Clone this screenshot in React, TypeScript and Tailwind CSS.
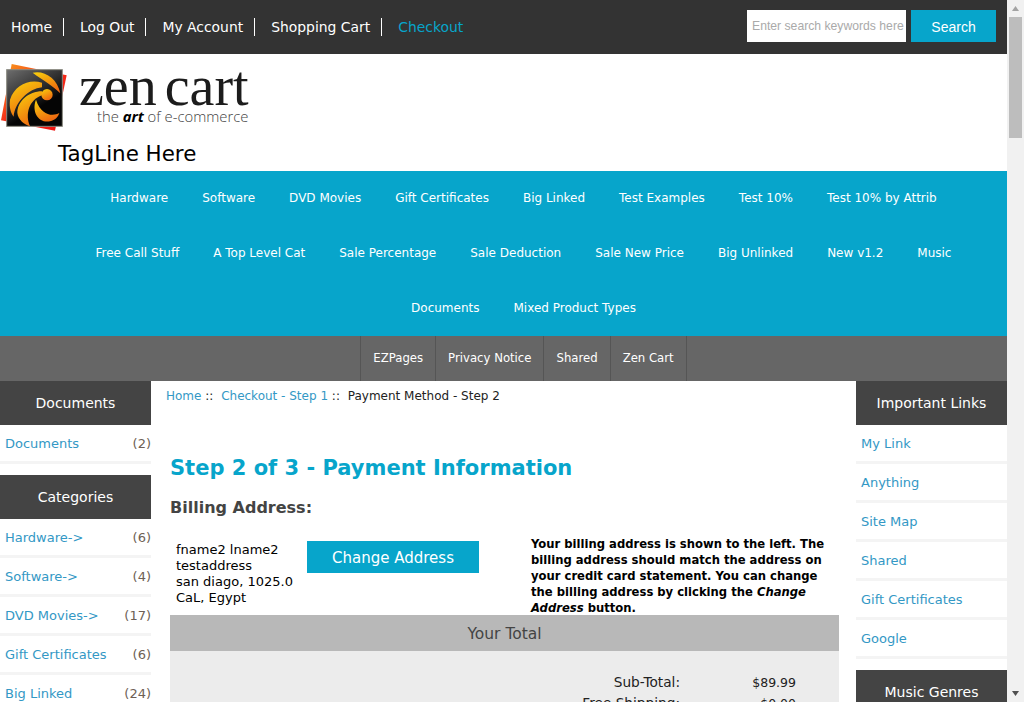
const font = { fontFamily: '"DejaVu Sans", sans-serif' }

const topLinks = ['Home', 'Log Out', 'My Account', 'Shopping Cart']
const catRows = [
  ['Hardware', 'Software', 'DVD Movies', 'Gift Certificates', 'Big Linked', 'Test Examples', 'Test 10%', 'Test 10% by Attrib'],
  ['Free Call Stuff', 'A Top Level Cat', 'Sale Percentage', 'Sale Deduction', 'Sale New Price', 'Big Unlinked', 'New v1.2', 'Music'],
  ['Documents', 'Mixed Product Types'],
]
const ezPages = ['EZPages', 'Privacy Notice', 'Shared', 'Zen Cart']
const categories: [string, string][] = [
  ['Hardware->', '(6)'],
  ['Software->', '(4)'],
  ['DVD Movies->', '(17)'],
  ['Gift Certificates', '(6)'],
  ['Big Linked', '(24)'],
]
const importantLinks = ['My Link', 'Anything', 'Site Map', 'Shared', 'Gift Certificates', 'Google']

function Logo() {
  return (
    <div className="relative h-[117px] pt-[4px]">
      <svg width="90" height="80" viewBox="0 0 270 240">
        <defs>
          <linearGradient id="back" x1="0" y1="0" x2="1" y2="1">
            <stop offset="0" stopColor="#f9a11b" />
            <stop offset="0.45" stopColor="#f5301a" />
            <stop offset="1" stopColor="#ee1111" />
          </linearGradient>
          <linearGradient id="plate" x1="0" y1="0" x2="0.6" y2="1">
            <stop offset="0" stopColor="#6e6e6e" />
            <stop offset="0.5" stopColor="#2c2c2c" />
            <stop offset="0.75" stopColor="#050505" />
          </linearGradient>
          <linearGradient id="arm" x1="0" y1="0" x2="0.5" y2="1">
            <stop offset="0" stopColor="#f8d20c" />
            <stop offset="1" stopColor="#ee6a10" />
          </linearGradient>
        </defs>
        <path d="M35 18 L200 52 L165 218 L3 187 Z" fill="url(#back)" />
        <rect x="20" y="35" width="167" height="170" fill="url(#plate)" stroke="#8a8a80" strokeWidth="3" />
        <path d="M98 44 C132 36 172 60 181 106 C160 84 130 68 98 44 Z" fill="url(#arm)" />
        <path d="M126 74 C86 62 44 82 30 125 C27 150 33 165 41 176 C45 132 86 92 126 88 Z" fill="url(#arm)" />
        <path d="M126 100 C86 100 52 130 52 165 C54 186 74 200 90 205 C75 170 86 126 126 112 Z" fill="url(#arm)" />
        <path d="M108 125 C94 160 114 196 150 190 C165 187 175 176 178 165 C160 175 124 175 108 125 Z" fill="url(#arm)" />
        <circle cx="141" cy="110" r="17" fill="url(#arm)" />
      </svg>
      <span className="absolute top-[5px] left-[79px] text-[56px] leading-[55px] [word-spacing:-6px] text-[#1c1c1c]" style={{ fontFamily: '"Liberation Serif", serif' }}>zen cart</span>
      <span className="absolute top-[53px] left-[97px] text-[14.8px] leading-[18px] font-light whitespace-nowrap text-[#444]" style={{ fontFamily: '"Open Sans", sans-serif' }}>
        the <em className="font-bold text-black">art</em> of e-commerce
      </span>
    </div>
  )
}

function SideHeading({ children }: { children: string }) {
  return <div className="flex h-11 items-center justify-center bg-[#444444] text-[14px] text-white">{children}</div>
}

function SideRow({ label, count }: { label: string; count?: string }) {
  return (
    <div className="flex h-[39px] shrink-0 items-center justify-between border-b-[3px] border-[#f4f4f4] pt-[2px] pl-[5px] text-[13px]">
      <span className="text-[#3398c5]">{label}</span>
      {count && <span className="text-[#6e5f55]">{count}</span>}
    </div>
  )
}

export default function App() {
  return (
    <div className="flex h-[702px] w-[1024px] overflow-hidden bg-white" style={font}>
      <div className="w-[1007px] shrink-0">
        <div className="flex h-[54px] items-center justify-between bg-[#333333]">
          <div className="flex items-center pl-[11px] text-[13.9px] text-white">
            {topLinks.map((l) => (
              <span key={l} className="mr-4 border-r border-white pr-[11px] leading-[18px]">{l}</span>
            ))}
            <span className="text-[#07a5cb]">Checkout</span>
          </div>
          <div className="mb-[2px] flex items-center gap-[5px] pr-[11px]" style={{ fontFamily: '"Liberation Sans", sans-serif' }}>
            <div className="flex h-8 w-[159px] items-center overflow-hidden bg-white pl-[5px] text-[12.2px] whitespace-nowrap text-[#aaaaaa]">Enter search keywords here</div>
            <div className="flex h-8 w-[85px] items-center justify-center bg-[#07a5cb] pt-[2px] text-[14px] text-white">Search</div>
          </div>
        </div>

        <Logo />

        <div className="relative -mt-[34px] h-[34px] pl-[58px] text-[21.4px] leading-[34px] text-black">TagLine Here</div>

        <div className="bg-[#07a5cb] pl-[40px]">
          {catRows.map((row) => (
            <div key={row[0]} className="flex h-[55px] items-center justify-center gap-[34px] pb-[2px] text-[12px] text-white">
              {row.map((c) => <span key={c}>{c}</span>)}
            </div>
          ))}
        </div>

        <div className="flex h-[45px] justify-center bg-[#666666] pl-[40px]">
          <div className="flex border-l border-[#555555]">
            {ezPages.map((p) => (
              <div key={p} className="flex items-center border-r border-[#555555] px-3 text-[11.7px] text-white">{p}</div>
            ))}
          </div>
        </div>

        <div className="flex">
          <aside className="flex w-[151px] shrink-0 flex-col">
            <SideHeading>Documents</SideHeading>
            <SideRow label="Documents" count="(2)" />
            <div className="h-[11px]" />
            <SideHeading>Categories</SideHeading>
            {categories.map(([l, c]) => <SideRow key={l} label={l} count={c} />)}
          </aside>

          <main className="w-[705px] shrink-0 pr-[17px] pl-[19px]">
            <div className="-ml-1 pt-[7px] text-[12px] leading-[16px]">
              <span className="text-[#3398c5]">Home</span>
              <span className="text-[#222]"> :: </span>
              <span className="ml-1 text-[#3398c5]">Checkout - Step 1</span>
              <span className="text-[#222]"> :: </span>
              <span className="ml-1 text-[#222]">Payment Method - Step 2</span>
            </div>
            <h1 className="mt-[49px] text-[21px] leading-[30px] font-bold text-[#07a5cb]">Step 2 of 3 - Payment Information</h1>
            <h2 className="mt-[13px] text-[16px] leading-[24px] font-bold text-[#444444]">Billing Address:</h2>
            <div className="mt-[20px] flex h-[75px]">
              <div className="mt-[2px] w-[137px] pl-[6px] text-[13px] leading-[16px] text-black">
                fname2 lname2<br />testaddress<br />san diago, 1025.0<br />CaL, Egypt
              </div>
              <div className="mt-[1px] flex h-8 w-[172px] items-center justify-center bg-[#07a5cb] pt-[2px] text-[15px] text-white">Change Address</div>
              <p className="-mt-[4px] ml-[52px] w-[300px] text-[11.6px] leading-[16px] font-bold text-black">
                Your billing address is shown to the left. The billing address should match the address on your credit card statement. You can change the billing address by clicking the <em>Change Address</em> button.
              </p>
            </div>
            <div className="flex h-9 items-center justify-center bg-[#b8b8b8] pt-[4px] text-[15.5px] text-[#444444]">Your Total</div>
            <div className="h-[200px] bg-[#ececec] pt-[21px] pr-[43px] text-[13px] leading-[21px] text-[#222]">
              <div className="flex justify-end"><span className="text-[13.7px]">Sub-Total:</span><span className="w-[116px] text-right text-[12.5px]">$89.99</span></div>
              <div className="flex justify-end"><span className="text-[13.7px]">Free Shipping:</span><span className="w-[116px] text-right text-[12.5px]">$0.00</span></div>
            </div>
          </main>

          <aside className="flex w-[151px] shrink-0 flex-col">
            <SideHeading>Important Links</SideHeading>
            {importantLinks.map((l) => <SideRow key={l} label={l} />)}
            <div className="h-[11px]" />
            <SideHeading>Music Genres</SideHeading>
          </aside>
        </div>
      </div>

      <div className="flex h-[702px] w-[17px] shrink-0 flex-col items-center bg-[#f1f1f1]">
        <svg width="17" height="17" viewBox="0 0 17 17"><path d="M5 11 L8.5 6 L12 11 Z" fill="#a3a3a3" /></svg>
        <div className="h-[121px] w-[13px] bg-[#bdbdbd]" />
        <svg width="17" height="17" viewBox="0 0 17 17" className="mt-auto"><path d="M5 6 L12 6 L8.5 11 Z" fill="#505050" /></svg>
      </div>
    </div>
  )
}
